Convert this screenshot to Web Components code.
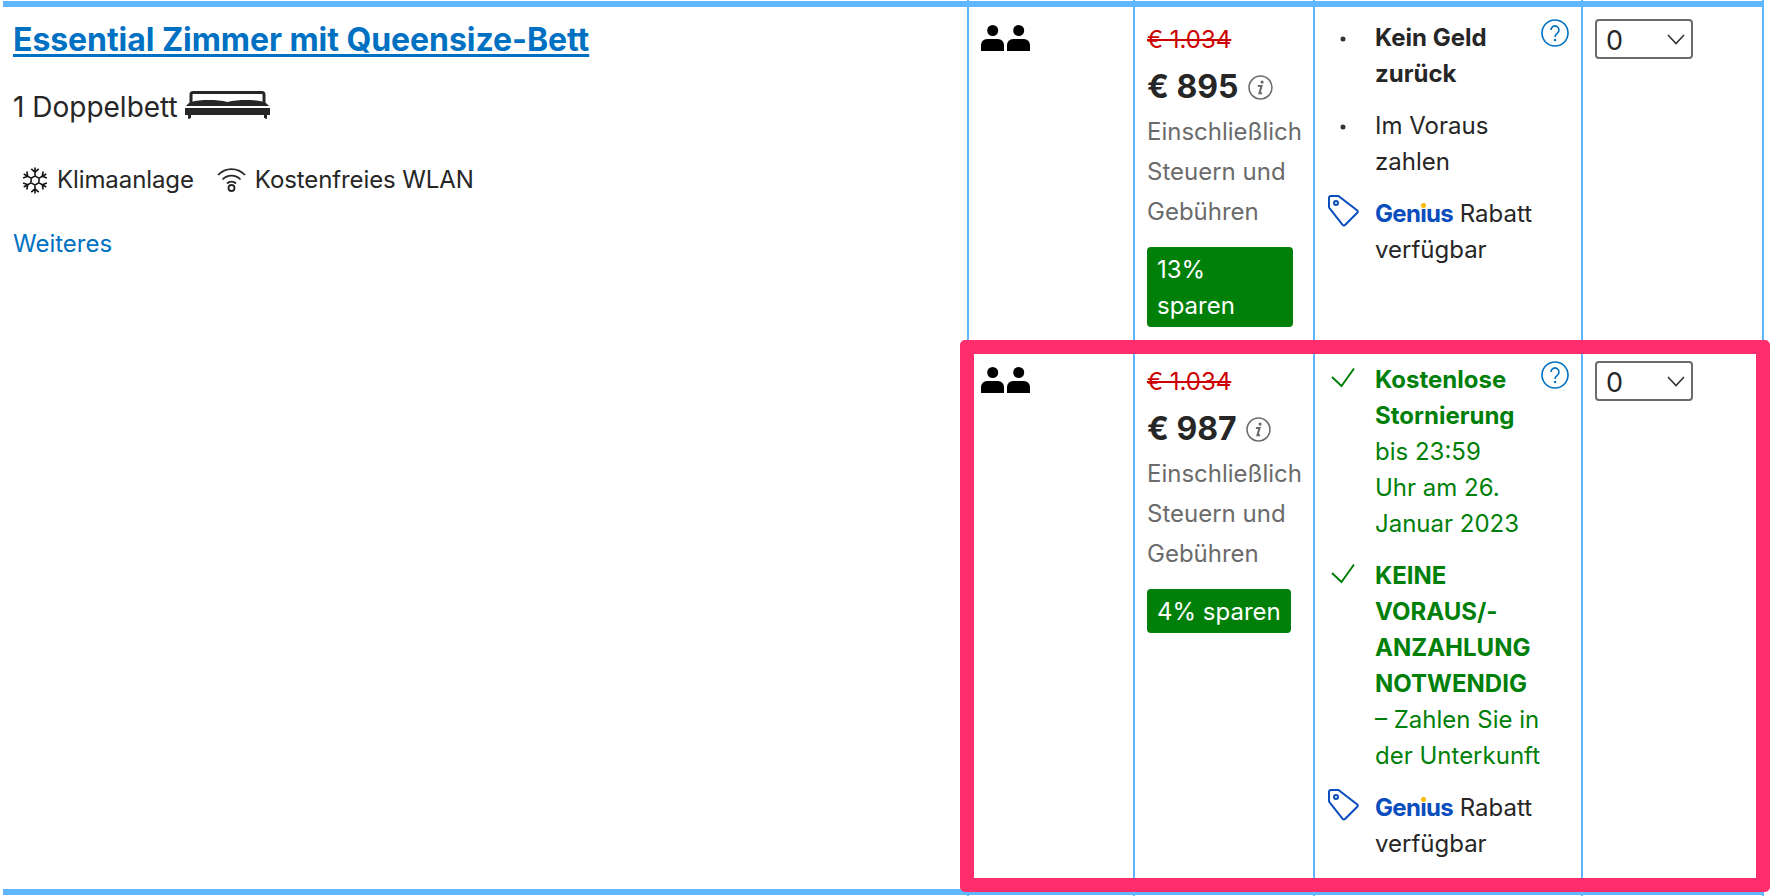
<!DOCTYPE html>
<html lang="de">
  <head>
    <meta charset="UTF-8" />
    <title>Zimmerauswahl</title>
    <style>
      html, body { margin: 0; height: 896px; overflow: hidden; background: #fff; }
      body { font-family: Inter, "Liberation Sans", sans-serif; font-size: 24px; color: #262626; }
    </style>
  </head>
  <body>
    <room-table>
      <room-info slot="info">
        <span slot="title">Essential Zimmer mit Queensize-Bett</span>
        <span slot="bed">1 Doppelbett</span>
        <room-facility icon="snow">Klimaanlage</room-facility>
        <room-facility icon="wifi">Kostenfreies WLAN</room-facility>
        <span slot="more">Weiteres</span>
      </room-info>

      <room-offer>
        <offer-price slot="price" old="€ 1.034" price="€ 895" wrap>
          <span slot="badge">13%<br />sparen</span>
        </offer-price>
        <term-item icon="dot"><b>Kein Geld<br />zurück</b></term-item>
        <term-item icon="dot">Im Voraus<br />zahlen</term-item>
        <term-item icon="tag"><genius-mark></genius-mark> Rabatt<br />verfügbar</term-item>
      </room-offer>

      <room-offer highlight>
        <offer-price slot="price" old="€ 1.034" price="€ 987">
          <span slot="badge">4% sparen</span>
        </offer-price>
        <term-item icon="check" good><b>Kostenlose<br />Stornierung</b><br />bis 23:59<br />Uhr am 26.<br />Januar 2023</term-item>
        <term-item icon="check" good><b>KEINE<br />VORAUS/-<br />ANZAHLUNG<br />NOTWENDIG</b><br />– Zahlen Sie in<br />der Unterkunft</term-item>
        <term-item icon="tag"><genius-mark></genius-mark> Rabatt<br />verfügbar</term-item>
      </room-offer>
    </room-table>

    <script>
      // one arm of the snowflake, turned six times
      const snowArms = [0, 60, 120, 180, 240, 300]
        .map((a) => `<path transform="rotate(${a} 14 14)" d="M14 9V0M10 1.500 14 5 18 1.500M14 9 18 11.500"/>`)
        .join("");

      const ICONS = {
        persons: `<svg width="49" height="26" viewBox="0 0 49 26"><g fill="#000"><circle cx="11.700" cy="5.500" r="5.500"/><path d="M0 26V20a6 6 0 0 1 6-6H17a6 6 0 0 1 6 6V26Z"/><circle cx="37.700" cy="5.500" r="5.500"/><path d="M26 26V20a6 6 0 0 1 6-6H43a6 6 0 0 1 6 6V26Z"/></g></svg>`,
        bed: `<svg width="85" height="28" viewBox="0 0 85 28"><path d="M6 13V3.500a2 2 0 0 1 2-2H77a2 2 0 0 1 2 2V13" fill="none" stroke="#262626" stroke-width="3"/><path d="M1 15C4 11 8 10 14 9.500 24 8.500 34 9 42.500 11 51 9 61 8.500 71 9.500 77 10 81 11 84 15Z" fill="#262626"/><path d="M0 17H85V24H82V27a1 1 0 0 1-2 0H5a1 1 0 0 1-2 0V24H0Z" fill="#262626"/><rect x="6" y="24" width="73" height="4" fill="#fff"/></svg>`,
        snow: `<svg width="26" height="27" viewBox="0 0 28 28"><g fill="none" stroke="#111" stroke-width="1.700">${snowArms}</g></svg>`,
        wifi: `<svg width="29" height="24" viewBox="0 0 29 24"><g fill="none" stroke="#262626" stroke-width="1.800"><path d="M1 7C8.500 -0.800 20.500 -0.800 28 7"/><path d="M5.500 11.500C10.500 6.300 18.500 6.300 23.500 11.500"/><path d="M10 15.500C12.500 13 16.500 13 19 15.500"/><circle cx="14.500" cy="20" r="3"/></g></svg>`,
        info: `<svg width="25" height="25" viewBox="0 0 24 24"><circle cx="12" cy="12" r="11" fill="none" stroke="#6b6b6b" stroke-width="1.500"/><circle cx="13.500" cy="6.800" r="1.500" fill="#6b6b6b"/><path d="M9.500 10.500H13L11 17.500H13.500" fill="none" stroke="#6b6b6b" stroke-width="2"/></svg>`,
        help: `<svg width="28" height="28" viewBox="0 0 28 28"><circle cx="14" cy="14" r="13" fill="none" stroke="#0071c2" stroke-width="1.600"/><path d="M10 11a4 4 0 1 1 6.200 3.300C14.800 15.300 14 16 14 18" fill="none" stroke="#0071c2" stroke-width="1.600"/><circle cx="14" cy="21" r="1.200" fill="#0071c2"/></svg>`,
        dot: `<svg width="30" height="36" viewBox="0 0 30 36"><circle cx="15" cy="19" r="2.500" fill="#333"/></svg>`,
        check: `<svg width="30" height="36" viewBox="0 0 30 36"><path d="M4 15 13.500 24 26 6.500" fill="none" stroke="#008009" stroke-width="2"/></svg>`,
        tag: `<svg width="31" height="32" viewBox="0 0 31 32"><g fill="none" stroke="#0a4dbd" stroke-width="2"><path d="M1 3a2 2 0 0 1 2-2H10a2 2 0 0 1 1.500.700L29.300 15.500a1.500 1.500 0 0 1 0 2.200L17 30a1.500 1.500 0 0 1-2.200 0L1.700 13.500A2.500 2.500 0 0 1 1 12Z"/><circle cx="8" cy="8" r="2"/></g></svg>`,
        chevron: `<svg width="18" height="11" viewBox="0 0 18 11"><path d="M1 1 9 9.500 17 1" fill="none" stroke="#333" stroke-width="1.600"/></svg>`,
      };

      class UiIcon extends HTMLElement {
        constructor() {
          super();
          this.attachShadow({ mode: "open" });
        }
        connectedCallback() {
          this.shadowRoot.innerHTML = `<style>:host{display:inline-flex;line-height:0}</style>${ICONS[this.getAttribute("name")]}`;
        }
      }
      customElements.define("ui-icon", UiIcon);

      class RoomTable extends HTMLElement {
        constructor() {
          super();
          this.attachShadow({ mode: "open" });
          this.shadowRoot.innerHTML = `
            <style>
              :host { display: flex; position: relative; margin-left: 3px; width: 1761px; height: 896px; }
              :host::before, :host::after { content: ""; position: absolute; left: 0; right: 0; background: #5fb8ff; z-index: 1; }
              :host::before { top: 1px; height: 6px; }
              :host::after { top: 889px; height: 6px; }
              .info { width: 964px; flex: none; }
              .offers { flex: 1; display: flex; flex-direction: column; }
            </style>
            <div class="info"><slot name="info"></slot></div>
            <div class="offers"><slot></slot></div>`;
        }
      }
      customElements.define("room-table", RoomTable);

      class RoomInfo extends HTMLElement {
        constructor() {
          super();
          this.attachShadow({ mode: "open" });
          this.shadowRoot.innerHTML = `
            <style>
              :host { display: block; padding: 20px 0 0 10px; }
              .title { font-size: 32px; font-weight: 700; line-height: 40px; letter-spacing: -0.06px; color: #0071c2; text-decoration: underline; text-decoration-thickness: 3px; text-underline-offset: 3px; }
              .bed { display: flex; align-items: flex-end; gap: 7px; margin-top: 28px; font-size: 28px; line-height: 38px; }
              .bed ui-icon { margin-bottom: 7px; }
              .facilities { display: flex; gap: 23px; margin: 36px 0 0 9px; letter-spacing: -0.1px; }
              .more { margin-top: 28px; line-height: 36px; color: #0071c2; }
            </style>
            <div class="title"><slot name="title"></slot></div>
            <div class="bed"><slot name="bed"></slot><ui-icon name="bed"></ui-icon></div>
            <div class="facilities"><slot></slot></div>
            <div class="more"><slot name="more"></slot></div>`;
        }
      }
      customElements.define("room-info", RoomInfo);

      class RoomFacility extends HTMLElement {
        constructor() {
          super();
          this.attachShadow({ mode: "open" });
          this.shadowRoot.innerHTML = `
            <style>
              :host { display: flex; align-items: center; gap: 9px; line-height: 36px; }
            </style>
            <ui-icon name="${this.getAttribute("icon")}"></ui-icon><slot></slot>`;
        }
      }
      customElements.define("room-facility", RoomFacility);

      class RoomOffer extends HTMLElement {
        constructor() {
          super();
          this.attachShadow({ mode: "open" });
          this.shadowRoot.innerHTML = `
            <style>
              :host { display: grid; grid-template-columns: 166px 180px 268px 183px; position: relative; height: 342px; flex: none; }
              :host([highlight]) { height: 554px; }
              :host([highlight])::after {
                content: ""; position: absolute; left: -7px; right: -6px; top: -2px; bottom: 4px;
                border: 14px solid #fe2e6c; border-radius: 5px; z-index: 2;
              }
              .cell { border-left: 2px solid #5fb8ff; box-sizing: border-box; padding-top: 19px; }
              .persons { padding-left: 12px; padding-top: 25px; }
              .price { padding-left: 12px; padding-top: 20px; }
              .terms { display: grid; grid-template-columns: 213px 28px; padding-left: 13px; }
              .list { display: flex; flex-direction: column; gap: 16px; padding-top: 1px; }
              .last { padding-left: 12px; border-right: 2px solid #5fb8ff; }
            </style>
            <div class="cell persons"><ui-icon name="persons"></ui-icon></div>
            <div class="cell price"><slot name="price"></slot></div>
            <div class="cell terms">
              <div class="list"><slot></slot></div>
              <div><ui-icon name="help"></ui-icon></div>
            </div>
            <div class="cell last"><room-select></room-select></div>`;
        }
      }
      customElements.define("room-offer", RoomOffer);

      class OfferPrice extends HTMLElement {
        constructor() {
          super();
          this.attachShadow({ mode: "open" });
          this.shadowRoot.innerHTML = `
            <style>
              :host { display: block; }
              .old { line-height: 40px; color: #cc0000; text-decoration: line-through; }
              .now { display: flex; align-items: center; gap: 9px; margin-top: 5px; line-height: 44px; font-size: 32px; font-weight: 700; }
              .tax { margin-top: 3px; line-height: 40px; color: #6b6b6b; }
              .badge { display: inline-block; margin-top: 15px; padding: 5px 10px 3px; border-radius: 4px; background: #008009; color: #fff; line-height: 36px; }
              :host([wrap]) .badge { width: 126px; }
            </style>
            <div class="old">${this.getAttribute("old")}</div>
            <div class="now">${this.getAttribute("price")} <ui-icon name="info"></ui-icon></div>
            <div class="tax">Einschließlich<br />Steuern und<br />Gebühren</div>
            <div class="badge"><slot name="badge"></slot></div>`;
        }
      }
      customElements.define("offer-price", OfferPrice);

      class TermItem extends HTMLElement {
        constructor() {
          super();
          this.attachShadow({ mode: "open" });
          this.shadowRoot.innerHTML = `
            <style>
              :host { display: grid; grid-template-columns: 47px 1fr; line-height: 36px; }
              :host([good]) { color: #008009; }
              ui-icon { align-self: start; height: 36px; }
              :host([icon="tag"]) ui-icon { margin-top: -1px; }
            </style>
            <div><ui-icon name="${this.getAttribute("icon")}"></ui-icon></div>
            <div><slot></slot></div>`;
        }
      }
      customElements.define("term-item", TermItem);

      class GeniusMark extends HTMLElement {
        constructor() {
          super();
          this.attachShadow({ mode: "open" });
          this.shadowRoot.innerHTML = `
            <style>
              :host { display: inline-block; position: relative; color: #0a4dbd; font-weight: 700; letter-spacing: -0.7px; }
              i { position: absolute; left: 46px; top: 7px; width: 5px; height: 5px; border-radius: 50%; background: #febb02; }
            </style>
            Genius<i></i>`;
        }
      }
      customElements.define("genius-mark", GeniusMark);

      class RoomSelect extends HTMLElement {
        constructor() {
          super();
          this.attachShadow({ mode: "open" });
          this.shadowRoot.innerHTML = `
            <style>
              :host { display: inline-grid; }
              select, ui-icon { grid-area: 1 / 1; }
              select {
                appearance: none; width: 98px; height: 40px; box-sizing: border-box; padding: 2px 0 0 9px; margin: 0;
                border: 2px solid #6b6b6b; border-radius: 4px; background: #fff; color: #262626;
                font-family: inherit; font-size: 27px;
              }
              ui-icon { justify-self: end; align-self: center; margin-right: 8px; pointer-events: none; }
            </style>
            <select><option>0</option><option>1</option></select>
            <ui-icon name="chevron"></ui-icon>`;
        }
      }
      customElements.define("room-select", RoomSelect);
    </script>
  </body>
</html>
